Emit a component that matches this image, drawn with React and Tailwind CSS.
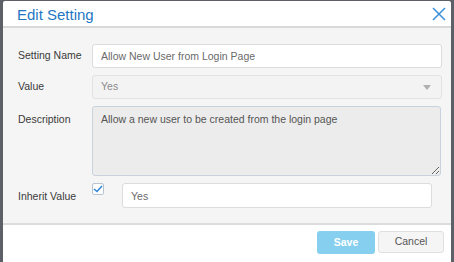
import React, { useState } from "react";

const App = () => {
  const [inherit, setInherit] = useState(true);

  return (
    <div className="w-[454px] h-[262px] bg-[#5d6167] pl-[3px] pr-[3px] pt-px overflow-hidden" style={{ fontFamily: '"Liberation Sans", Arial, sans-serif' }}>
      <div className="bg-white h-[261px] rounded-t-[2px] flex flex-col">
        {/* Header */}
        <div className="h-[27px] flex items-center justify-between pl-[14px] pr-[5px] border-b-2 border-[#d9d9d9] shrink-0">
          <h1 className="text-[15px] text-[#1f77c4] leading-none pt-px">Edit Setting</h1>
          <button className="text-[#3b8fd9]">
            <svg width="14" height="14" viewBox="0 0 14 14" fill="none" stroke="currentColor" strokeWidth="1.5">
              <path d="M1 1 L13 13 M13 1 L1 13" />
            </svg>
          </button>
        </div>

        {/* Body */}
        <div className="bg-[#f5f5f5] pl-[15px] pr-[9px] pt-[16px] pb-[15px] flex flex-col gap-[7px] text-[10.5px] text-[#3a3a3a]">
          <div className="flex items-center">
            <label className="w-[74px]">Setting Name</label>
            <input
              type="text"
              defaultValue="Allow New User from Login Page"
              className="flex-1 h-[24px] px-[8px] bg-white border border-[#dcdcdc] rounded-[3px] text-[#6a6a6a] outline-none"
            />
          </div>

          <div className="flex items-center">
            <label className="w-[74px]">Value</label>
            <div className="flex-1 h-[24px] px-[8px] bg-[#f3f3f3] border border-[#e2e2e2] rounded-[3px] text-[#8a8a8a] flex items-center justify-between">
              <span>Yes</span>
              <span className="w-0 h-0 border-l-[4px] border-r-[4px] border-t-[5px] border-l-transparent border-r-transparent border-t-[#b0b0b0] mr-[2px]"></span>
            </div>
          </div>

          <div className="flex items-start">
            <label className="w-[74px] pt-[6px]">Description</label>
            <textarea
              defaultValue="Allow a new user to be created from the login page"
              className="flex-1 h-[70px] mr-px px-[8px] py-[5px] bg-[#ececec] border border-[#c9d3dd] rounded-[3px] text-[#555] outline-none resize"
            />
          </div>

          <div className="flex items-center">
            <label className="w-[74px] pt-[2px]">Inherit Value</label>
            <div className="self-start">
              <button
                onClick={() => setInherit(!inherit)}
                className="w-[12px] h-[12px] border border-[#b8c4d0] rounded-[2px] bg-white flex items-center justify-center"
              >
                {inherit && (
                  <svg width="10" height="8" viewBox="0 0 10 8" fill="none" stroke="#2f86d6" strokeWidth="1.5">
                    <path d="M1 4 L4 6.5 L9 1" />
                  </svg>
                )}
              </button>
            </div>
            <input
              type="text"
              defaultValue="Yes"
              className="ml-[18px] w-[310px] h-[25px] px-[8px] bg-white border border-[#dcdcdc] rounded-[3px] text-[#6a6a6a] outline-none"
            />
          </div>
        </div>

        {/* Footer */}
        <div className="flex-1 border-t-2 border-[#dcdcdc] flex justify-end items-start gap-[3px] pt-[6px] pr-[7px]">
          <button className="w-[58px] h-[23px] rounded-[3px] bg-[#87cfef] text-white text-[10.5px] font-bold">Save</button>
          <button className="w-[66px] h-[22px] rounded-[3px] bg-[#f5f5f5] border border-[#e0e0e0] text-[#555] text-[10.5px]">Cancel</button>
        </div>
      </div>
    </div>
  );
};

export default App;
